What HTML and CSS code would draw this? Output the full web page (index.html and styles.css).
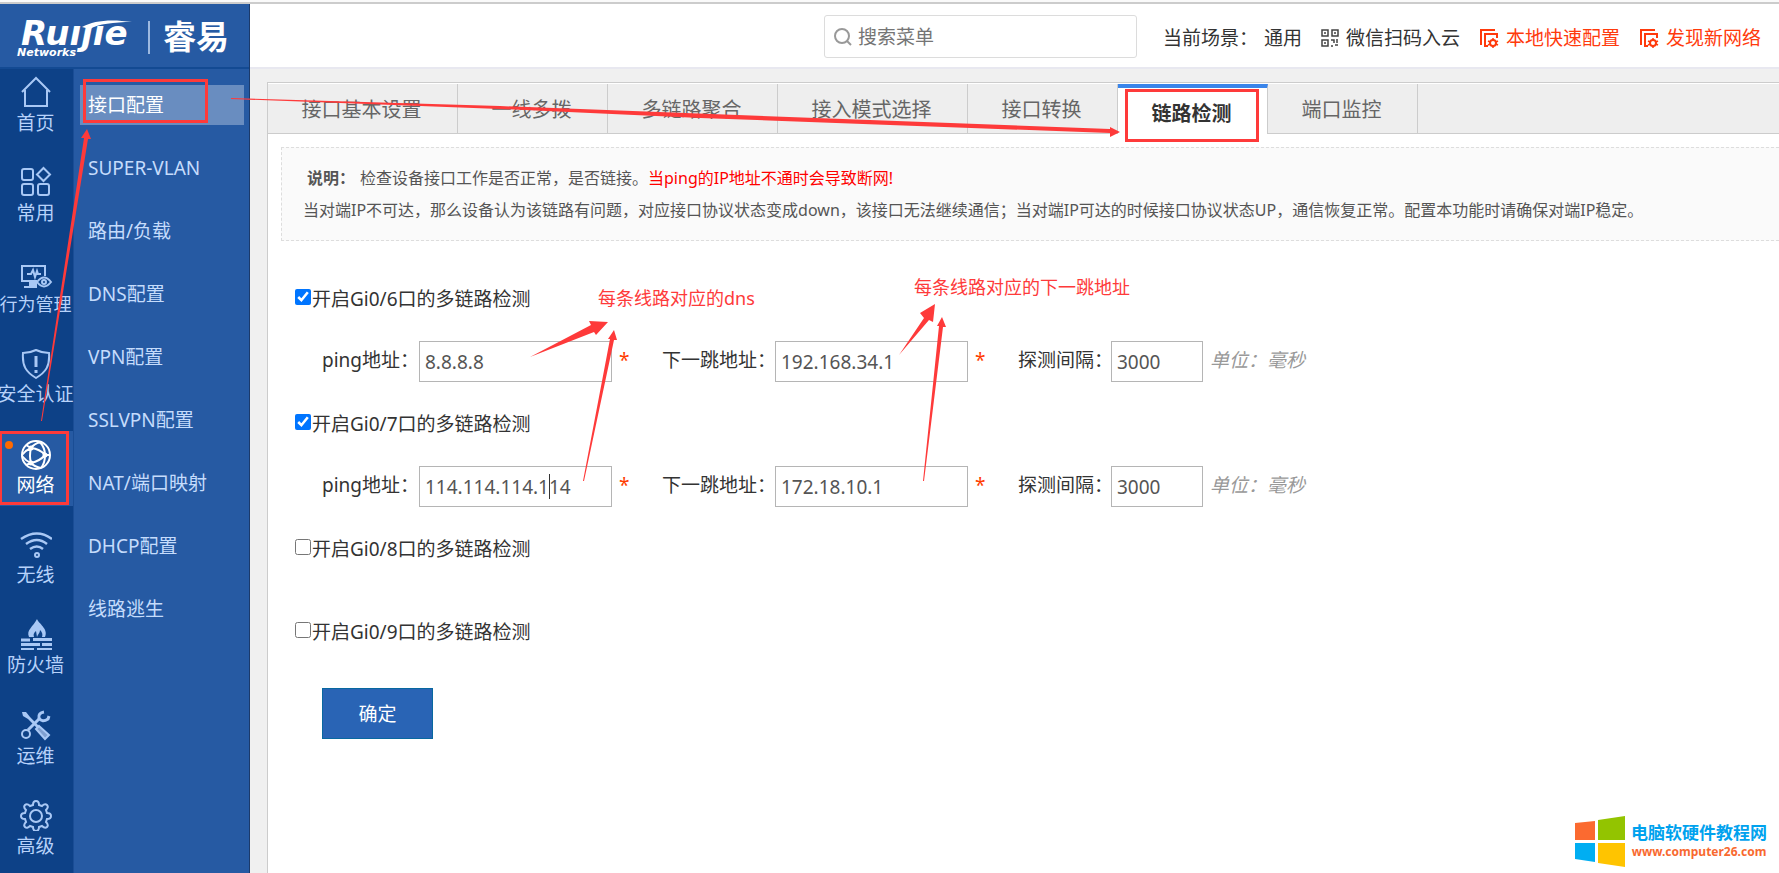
FILE: index.html
```html
<!DOCTYPE html>
<html lang="zh-CN">
<head>
<meta charset="utf-8">
<title>链路检测</title>
<link rel="stylesheet" href="styles.css">
</head>
<body>
<div class="app">
  <aside class="side">
    <div class="logo">
      <svg class="logo-mark" width="250" height="63" viewBox="0 4 250 63" role="img" aria-label="Ruijie Networks 睿易">
        <text class="logo-brand" x="21" y="45">Ruıȷıe</text>
        <path d="M82 27 C94 20 112 19 132 22 C114 22 98 24 90 29 Z" fill="#fff"/>
        <text class="logo-sub" x="17" y="56">Networks</text>
        <path d="M149 21V54" stroke="#9db9e0" stroke-width="2"/>
        <text class="logo-cn" x="163" y="49">睿易</text>
      </svg>
    </div>
    <div class="menus">
      <nav class="main-nav">
        <a class="nav-item" href="#">
          <svg class="icon" viewBox="0 0 32 32"><path d="M2 16 16 2l14 14M5 14v16h22V14"/></svg>
          <span>首页</span></a>
        <a class="nav-item" href="#">
          <svg class="icon" viewBox="0 0 32 32"><rect x="2" y="3" width="11" height="11" rx="2"/><path d="M23.500 2 30 8.500 23.500 15 17 8.500z"/><rect x="2" y="18" width="11" height="11" rx="2"/><rect x="18" y="18" width="11" height="11" rx="2"/></svg>
          <span>常用</span></a>
        <a class="nav-item" href="#">
          <svg class="icon icon-wide" viewBox="0 0 34 32"><path d="M18 24H3V9h23v10M8 17h4l2-4 2 7 2-6 1 3h3"/><path d="M10 25h8v6H5v-2h5z" fill="#a9c8f5" stroke="none"/><path d="M18 25q7-9 14 0-7 9-14 0z"/><circle cx="25" cy="25" r="2"/></svg>
          <span class="tight">行为管理</span></a>
        <a class="nav-item" href="#">
          <svg class="icon" viewBox="0 0 32 32"><path d="M16 3c4 2 9 3 13 3 1 13-3 19-13 25C6 25 2 19 3 6c4 0 9-1 13-3z"/><path d="M16 9v11M16 23v3" stroke-width="3"/></svg>
          <span>安全认证</span></a>
        <a class="nav-item current" href="#">
          <svg class="icon" viewBox="0 0 32 32"><circle cx="16" cy="17" r="14"/><path d="M11 10q-2 8 0 15 9-2 14-8-5-6-14-7zM11 10 6 7M11 10q3-4 9-6M11 25l-5 2M11 25q4 4 10 5M25 17h5M25 17q0-7-5-13M25 17q0 8-4 13M11 10q-5 2-9 7M11 25q-5-2-9-7"/><circle cx="11" cy="10" r="1.500"/><circle cx="11" cy="25" r="1.500"/><circle cx="25" cy="17" r="1.500"/></svg>
          <span>网络</span></a>
        <a class="nav-item" href="#">
          <svg class="icon" viewBox="0 0 32 32"><path d="M1 11q16-11 31 0M6 16q11-8 21 0M10 21q7-5 13 0" stroke-width="2.500"/><circle cx="17" cy="27" r="2"/></svg>
          <span>无线</span></a>
        <a class="nav-item" href="#">
          <svg class="icon" viewBox="0 0 32 32"><path d="M9 19C6 12 13 9 17 1c1 4 12 10 8 18h-3c1-3 0-5-2-7 0 3-2 4-3 7l-1-6c-2 2-3 3-2 6z" fill="#a9c8f5" stroke="none"/><path d="M1 22h9M13 21.500h20M1 26.500h19M22 26.500h11M1 31.500h13M17 31.500h16" stroke-width="3"/></svg>
          <span>防火墙</span></a>
        <a class="nav-item" href="#">
          <svg class="icon" viewBox="0 0 32 32"><path d="M2 3l4 0 4 5 9 9-2 2-9-9-5-3z" fill="#a9c8f5" stroke="none"/><path d="M19 17l10 9-4 4-9-10z" fill="#7f9fd0"/><circle cx="6" cy="25" r="4"/><path d="M8 21 19 10" stroke-width="3"/><path d="M24 3q-6 1-5 6 3 5 9 1l1-3" stroke-width="3"/></svg>
          <span>运维</span></a>
        <a class="nav-item" href="#">
          <svg class="icon" viewBox="0 0 32 32"><path d="M13 6q0-4 3-4t3 4l3 1q3-3 5-1t-1 5l1 3q4 0 4 3t-4 3l-1 3q3 3 1 5t-5-1l-3 1q0 4-3 4t-3-4l-3-1q-3 3-5 1t1-5l-1-3q-4 0-4-3t4-3l1-3Q3 8 5 6t5 1z"/><circle cx="16" cy="17" r="6"/></svg>
          <span>高级</span></a>
      </nav>
      <nav class="sub-nav">
        <a class="sub-item chosen" href="#">接口配置</a>
        <a class="sub-item" href="#">SUPER-VLAN</a>
        <a class="sub-item" href="#">路由/负载</a>
        <a class="sub-item" href="#">DNS配置</a>
        <a class="sub-item" href="#">VPN配置</a>
        <a class="sub-item" href="#">SSLVPN配置</a>
        <a class="sub-item" href="#">NAT/端口映射</a>
        <a class="sub-item" href="#">DHCP配置</a>
        <a class="sub-item" href="#">线路逃生</a>
      </nav>
    </div>
  </aside>

  <div class="main">
    <header class="top">
      <label class="search">
        <svg width="18" height="18" viewBox="0 0 18 18" fill="none" stroke="#999" stroke-width="2"><circle cx="8" cy="8" r="7"/><path d="m13 13 4 4"/></svg>
        <input class="search-input" type="text" placeholder="搜索菜单" aria-label="搜索菜单">
      </label>
      <div class="top-links">
        <span class="scene">当前场景：</span>
        <a class="scene-value" href="#">通用</a>
        <a class="top-link" href="#">
          <svg width="18" height="18" viewBox="0 0 18 18" fill="none" stroke="#444" stroke-width="1.500"><path d="M1 1h6v6H1zM11 1h6v6h-6zM1 11h6v6H1z"/><path d="M3 4h2M13 4h2M3 14h2M10 11h3v3M16 10v4M10 17h2M14 16h3"/></svg>
          微信扫码入云</a>
        <a class="top-link hot" href="#">
          <svg width="20" height="20" viewBox="0 0 20 20" fill="none" stroke="#ff3a0c" stroke-width="2"><path d="M2 17V2h14"/><path d="M9 18H6V6h12v4"/><circle cx="14" cy="15" r="3"/><path d="M14 10v2M14 18v2M9 13l2 1M17 16l2 1M9 17l2-1M17 14l2-1" stroke-width="1.500"/></svg>
          本地快速配置</a>
        <a class="top-link hot" href="#">
          <svg width="20" height="20" viewBox="0 0 20 20" fill="none" stroke="#ff3a0c" stroke-width="2"><path d="M2 17V2h14"/><path d="M9 18H6V6h12v4"/><circle cx="14" cy="15" r="3"/><path d="M14 10v2M14 18v2M9 13l2 1M17 16l2 1M9 17l2-1M17 14l2-1" stroke-width="1.500"/></svg>
          发现新网络</a>
      </div>
    </header>

    <main class="panel">
      <div class="tabs" role="tablist">
        <button class="tab tab-l" role="tab">接口基本设置</button>
        <button class="tab" role="tab">一线多拨</button>
        <button class="tab tab-m" role="tab">多链路聚合</button>
        <button class="tab tab-l" role="tab">接入模式选择</button>
        <button class="tab" role="tab">接口转换</button>
        <button class="tab active" role="tab" aria-selected="true">链路检测</button>
        <button class="tab" role="tab">端口监控</button>
        <div class="tabs-rest"></div>
      </div>

      <section class="notice">
        <p class="notice-line lead"><b>说明：</b><span>检查设备接口工作是否正常，是否链接。<span class="warn">当ping的IP地址不通时会导致断网!</span></span></p>
        <p class="notice-line">当对端IP不可达，那么设备认为该链路有问题，对应接口协议状态变成down，该接口无法继续通信；当对端IP可达的时候接口协议状态UP，通信恢复正常。配置本功能时请确保对端IP稳定。</p>
      </section>

      <form class="form">
        <div class="group">
          <label class="check"><input type="checkbox" checked>开启Gi0/6口的多链路检测</label>
          <div class="fields">
            <label for="ping6">ping地址：</label>
            <input class="text" id="ping6" type="text" value="8.8.8.8">
            <span class="star">*</span>
            <label for="hop6">下一跳地址：</label>
            <input class="text" id="hop6" type="text" value="192.168.34.1">
            <span class="star">*</span>
            <label for="gap6">探测间隔：</label>
            <input class="text" id="gap6" type="text" value="3000">
            <em class="unit">单位：毫秒</em>
          </div>
        </div>
        <div class="group">
          <label class="check"><input type="checkbox" checked>开启Gi0/7口的多链路检测</label>
          <div class="fields">
            <label for="ping7">ping地址：</label>
            <input class="text" id="ping7" type="text" value="114.114.114.114">
            <span class="star">*</span>
            <label for="hop7">下一跳地址：</label>
            <input class="text" id="hop7" type="text" value="172.18.10.1">
            <span class="star">*</span>
            <label for="gap7">探测间隔：</label>
            <input class="text" id="gap7" type="text" value="3000">
            <em class="unit">单位：毫秒</em>
          </div>
        </div>
        <div class="group closed">
          <label class="check"><input type="checkbox">开启Gi0/8口的多链路检测</label>
        </div>
        <div class="group last">
          <label class="check"><input type="checkbox">开启Gi0/9口的多链路检测</label>
        </div>
        <button class="submit" type="button">确定</button>
      </form>
    </main>
  </div>

  <div class="marks">
    <svg class="arrows" width="1300" height="520" viewBox="0 0 1300 520" fill="#fe3a3a">
      <path d="M231 98 L500 106 L1110 129 V127 L1120 132 L1110 137 V133 L700 118 L500 109 L231 99 Z"/>
      <path d="M41 421 L84 138 H81 L87 129 L91 139 H88 L42 421 Z"/>
      <path d="M530 357 L591 325 L589 321 L608 322 L596 335 L594 332 Z"/>
      <path d="M583 481 L610 339 H608 L614 330 L617 340 H614 L584 481 Z"/>
      <path d="M899 355 L924 318 L920 313 L935 304 L933 322 L929 320 Z"/>
      <path d="M923 481 L939 326 H937 L942 317 L946 327 H943 L924 481 Z"/>
      <path d="M549.500 474V499" stroke="#333"/>
      <circle cx="9" cy="445" r="4" fill="#ff6a00"/>
      <g fill="none" stroke="#fe3a3a" stroke-width="3">
        <rect x="84.500" y="80.500" width="122" height="41"/>
        <rect x="0.500" y="432.500" width="67" height="71"/>
        <rect x="1126.500" y="90.500" width="131" height="50"/>
      </g>
    </svg>
    <span class="remark remark-dns">每条线路对应的dns</span>
    <span class="remark remark-hop">每条线路对应的下一跳地址</span>
  </div>

  <div class="watermark">
    <svg width="50" height="52" viewBox="0 0 50 52"><path d="M0 7 20 5V24H0z" fill="#fb6a30"/><path d="M23 4 50 0V24H23z" fill="#93c400"/><path d="M0 27H20V46L0 43z" fill="#00aef2"/><path d="M23 27H50V51L23 47z" fill="#ffc400"/></svg>
    <div class="watermark-text">
      <span class="watermark-name">电脑软硬件教程网</span>
      <span class="watermark-url">www.computer26.com</span>
    </div>
  </div>
</div>
</body>
</html>
```
FILE: styles.css
```css
* { box-sizing: border-box; }
body {
  margin: 0;
  font: 19px/26px "Noto Sans", "Noto Sans CJK SC", sans-serif;
  color: #333;
  background: #f0f0f0;
  overflow: hidden;
}
a { color: inherit; text-decoration: none; }
.app {
  position: relative;
  display: flex;
  min-height: 100vh;
  border-top: 2px solid #ccc;
  margin-top: 2px;
  margin-bottom: -2px;
}
.app::before {
  content: "";
  position: absolute;
  inset: -4px 0 auto;
  height: 2px;
  background: #fafafa;
}

.side {
  flex: none;
  width: 250px;
  display: flex;
  flex-direction: column;
  background: #265aa3;
  border-right: 1px solid #1b3a6b;
}
.logo { height: 65px; border-bottom: 2px solid #134a93; overflow: hidden; }
.logo-mark { display: block; fill: #fff; }
.logo-brand { font: italic 700 34px "DejaVu Sans", sans-serif; }
.logo-sub { font: italic 700 11px "DejaVu Sans", sans-serif; }
.logo-cn { font: 700 33px "Noto Sans CJK SC", sans-serif; }
.menus { flex: 1; display: flex; }

.main-nav {
  width: 74px;
  display: flex;
  flex-direction: column;
  justify-content: space-between;
  padding-bottom: 8px;
  background: #0d4187;
  border-right: 1px solid #1a4d95;
  color: #b7d2fa;
}
.nav-item {
  height: 75px;
  display: flex;
  flex-direction: column;
  align-items: center;
  gap: 2px;
  padding: 7px 2px 0 0;
  white-space: nowrap;
}
.nav-item.current { background: #265aa3; color: #fff; }
.icon {
  width: 32px;
  height: 32px;
  fill: none;
  stroke: #a9c8f5;
  stroke-width: 2;
}
.icon-wide { width: 34px; }
.current .icon { stroke: #fff; }
.tight { font-size: 18px; }

.sub-nav {
  flex: 1;
  display: flex;
  flex-direction: column;
  gap: 23px;
  padding: 16px 5px 0 6px;
}
.sub-item {
  padding: 7px 8px;
  height: 40px;
  color: #c5dcfc;
  white-space: nowrap;
}
.sub-item.chosen { background: #698dc0; color: #fff; }

.main { flex: 1; min-width: 0; display: flex; flex-direction: column; }
.top {
  height: 65px;
  display: flex;
  justify-content: flex-end;
  gap: 26px;
  padding: 11px 18px 0 0;
  background: #fff;
  border-bottom: 2px solid #e8e8f0;
  white-space: nowrap;
}
.search {
  display: flex;
  align-items: center;
  width: 313px;
  height: 43px;
  padding: 0 9px;
  gap: 6px;
  border: 1px solid #dcdcdc;
  border-radius: 3px;
}
.search-input {
  flex: 1;
  min-width: 0;
  border: 0;
  padding: 0;
  outline: 0;
  font: inherit;
  background: none;
}
.search-input::placeholder { color: #757575; opacity: 1; }
.top-links { display: flex; align-items: center; height: 46px; }
.scene-value { margin-left: 6px; }
.top-link { display: flex; align-items: center; gap: 7px; margin-left: 19px; }
.hot { color: #ff3a0c; }

.panel {
  flex: 1;
  margin: 13px 0 0 17px;
  border: solid #ccc;
  border-width: 1px 0 0 1px;
  padding-top: 1px;
  background: #fff;
}
.tabs { display: flex; height: 50px; }
.tab, .tabs-rest {
  border: solid #ccc;
  border-width: 0 1px 1px 0;
  background: #eee;
}
.tab {
  width: 150px;
  padding: 2px 2px 0 0;
  font: inherit;
  font-size: 20px;
  color: #666;
}
.tab-l { width: 190px; }
.tab-m { width: 170px; }
.tab.active {
  border-top: 4px solid #3a85ea;
  border-bottom: 0;
  background: #fff;
  color: #333;
  font-weight: 700;
  padding-top: 6px;
}
.tabs-rest { flex: 1; border-right: 0; }

.notice {
  margin: 13px 0 0 13px;
  padding: 14px 0 14px 21px;
  border: 1px dashed #ddd;
  border-right: 0;
  background: #fafafa;
  color: #555;
  font-size: 16px;
  line-height: 32px;
  white-space: nowrap;
}
.notice-line { margin: 0; }
.lead { display: flex; gap: 5px; padding-left: 4px; }
.warn { color: #f00; }

.form { padding: 44px 0 20px 27px; }
.group { margin-bottom: 28px; }
.group.closed { margin-bottom: 56px; }
.group.last { margin-bottom: 43px; }
.check { display: flex; align-items: flex-start; gap: 1px; padding-top: 1px; }
.check input { width: 16px; height: 16px; margin: 3px 0 0; }
.fields {
  display: grid;
  grid-template-columns: 97px 193px 50px 113px 193px 50px 93px 92px auto;
  align-items: center;
  margin: 29px 0 0 27px;
  white-space: nowrap;
}
.fields label, .star, .unit { padding-bottom: 3px; }
.text {
  width: 100%;
  height: 41px;
  border: 1px solid #b5b5b5;
  padding: 0 5px;
  font: inherit;
  color: #555;
}
.star { padding-left: 7px; color: #ff3c00; }
.unit { padding-left: 7px; color: #999; }
.submit {
  margin-left: 27px;
  width: 111px;
  height: 51px;
  border: 1px solid #0868a0;
  background: #2964b5;
  color: #fff;
  font: inherit;
}

.marks { position: absolute; inset: -4px auto auto 0; pointer-events: none; }
.arrows { display: block; }
.remark { position: absolute; font-size: 18px; color: #fe3a3a; white-space: nowrap; }
.remark-dns { left: 598px; top: 285px; }
.remark-hop { left: 914px; top: 274px; }

.watermark {
  position: absolute;
  right: 12px;
  bottom: 7px;
  display: flex;
  align-items: center;
  gap: 6px;
}
.watermark-text { display: flex; flex-direction: column; align-items: center; font-weight: 700; line-height: 19px; }
.watermark-name { font-size: 17px; color: #00a2ee; }
.watermark-url { font-size: 12px; color: #f8692f; }
```
